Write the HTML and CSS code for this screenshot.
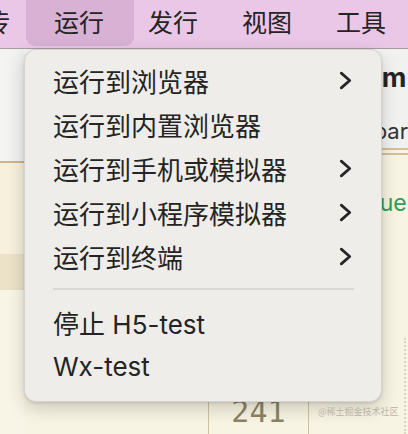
FILE: index.html
```html
<!DOCTYPE html>
<html lang="zh">
<head>
    <meta charset="UTF-8">
    <title>运行菜单</title>
    <link rel="stylesheet" href="styles.css">
</head>
<body>
    <div class="menubar">
        <span class="menu-item first">传</span>
        <span class="menu-item active">运行</span>
        <span class="menu-item">发行</span>
        <span class="menu-item">视图</span>
        <span class="menu-item">工具</span>
    </div>

    <div class="workspace">
        <div class="col col-left">
            <div class="panel-top"></div>
            <div class="band"></div>
            <div class="rest"></div>
        </div>
        <div class="col col-center">
            <div class="panel-top"></div>
            <div class="center-body">
                <div class="cell"><span class="num">241</span></div>
            </div>
        </div>
        <div class="col col-right">
            <div class="panel-top right-top">
                <span class="word-bold">m</span>
                <span class="word">bar</span>
            </div>
            <div class="right-body">
                <span class="word green">ue</span>
                <div class="dots"></div>
            </div>
        </div>
    </div>

    <div class="dropdown">
        <div class="dd-item"><span>运行到浏览器</span>
            <svg class="chev" viewBox="0 0 12 18"><polyline points="2,2 10,9 2,16"/></svg></div>
        <div class="dd-item"><span>运行到内置浏览器</span></div>
        <div class="dd-item"><span>运行到手机或模拟器</span>
            <svg class="chev" viewBox="0 0 12 18"><polyline points="2,2 10,9 2,16"/></svg></div>
        <div class="dd-item"><span>运行到小程序模拟器</span>
            <svg class="chev" viewBox="0 0 12 18"><polyline points="2,2 10,9 2,16"/></svg></div>
        <div class="dd-item"><span>运行到终端</span>
            <svg class="chev" viewBox="0 0 12 18"><polyline points="2,2 10,9 2,16"/></svg></div>
        <div class="dd-sep"></div>
        <div class="dd-item"><span>停止 H5-test</span></div>
        <div class="dd-item"><span>Wx-test</span></div>
    </div>

    <div class="watermark">@稀土掘金技术社区</div>
</body>
</html>
```

FILE: styles.css
```css
body {
    margin: 0;
    width: 408px;
    height: 434px;
    overflow: hidden;
    position: relative;
    font-family: "Inter", "Noto Sans CJK SC", sans-serif;
    color: #242424;
    background-color: #f8f4e4;
}
.menubar {
    display: flex;
    align-items: center;
    height: 48px;
    background-color: #ebc7e7;
    border-bottom: 1px solid #a99aa6;
    font-size: 25px;
    white-space: nowrap;
}
.menu-item {
    padding: 0 22px;
    height: 46px;
    line-height: 47px;
    align-self: flex-start;
}
.menu-item.first {
    margin-left: -37px;
}
.menu-item.active {
    background-color: #d8b1d4;
    border-radius: 0 0 9px 9px;
    padding: 0 30px 0 28px;
    margin: 0 -8px 0 -6px;
}
.workspace {
    display: flex;
    height: 385px;
}
.col {
    display: flex;
    flex-direction: column;
}
.col-left {
    width: 24px;
}
.col-center {
    width: 358px;
}
.col-right {
    flex: 1;
}
.panel-top {
    height: 112px;
    background: linear-gradient(90deg, #f4f4f3, #f0f0ee);
    border-bottom: 2px solid #cdb48f;
}
.col-left .band {
    height: 91px;
    background-color: #f6f0dd;
}
.col-left .rest {
    flex: 1;
    background: linear-gradient(180deg, #ebe2c7 0, #ebe2c7 36px, #f9f5e6 36px);
}
.center-body {
    flex: 1;
    display: flex;
    align-items: flex-end;
    background-color: #f8f4e3;
}
.cell {
    margin-left: 184px;
    width: 99px;
    height: 80px;
    border-left: 1px solid #cfc09b;
    border-right: 1px solid #cfc09b;
    display: flex;
    align-items: flex-end;
    justify-content: center;
}
.num {
    font-family: "DejaVu Sans Mono", monospace;
    font-size: 30px;
    color: #8a8466;
    line-height: 30px;
    margin-bottom: 7px;
}
.right-top {
    height: 99px;
    border-bottom: 2px solid #d3bf9c;
    display: flex;
    flex-direction: column;
    margin-left: -7px;
}
.word-bold {
    font-weight: 700;
    font-size: 27px;
    margin: 15px 0 0 8px;
    line-height: 28px;
}
.word {
    font-size: 22px;
    line-height: 24px;
    color: #333;
    margin-top: 27px;
}
.right-body {
    flex: 1;
    border-top: 3px solid #f8f4e4;
    box-shadow: inset 0 2px 0 #d3bf9c;
    position: relative;
    display: flex;
    flex-direction: column;
    background-color: #f8f4e3;
}
.right-body .green {
    color: #2e9e5b;
    font-size: 23px;
    margin-top: 38px;
    margin-left: -1px;
}
.dots {
    position: absolute;
    right: 2px;
    top: 185px;
    bottom: 0;
    border-right: 2px dotted #ddd5c0;
}
.dropdown {
    position: absolute;
    left: 24px;
    top: 49px;
    width: 358px;
    box-sizing: border-box;
    padding: 8px 0 13px;
    background-color: #eeede9;
    border: 1px solid #d6d4cf;
    border-radius: 12px;
    box-shadow: 0 6px 18px rgba(0, 0, 0, 0.18), 0 1px 3px rgba(0, 0, 0, 0.12);
    font-size: 26px;
}
.dd-item {
    display: flex;
    align-items: center;
    justify-content: space-between;
    height: 44px;
    padding: 0 29px 0 28px;
    white-space: nowrap;
}
.chev {
    width: 13px;
    height: 19px;
    fill: none;
    stroke: #262626;
    stroke-width: 2.6;
    stroke-linecap: round;
    stroke-linejoin: round;
}
.dd-sep {
    height: 2px;
    margin: 10px 27px 10px 28px;
    background-color: #d9d8d3;
}
.watermark {
    position: absolute;
    left: 318px;
    top: 405px;
    font-family: "Noto Sans CJK SC", sans-serif;
    font-size: 9px;
    color: #b9b4a4;
}
```
